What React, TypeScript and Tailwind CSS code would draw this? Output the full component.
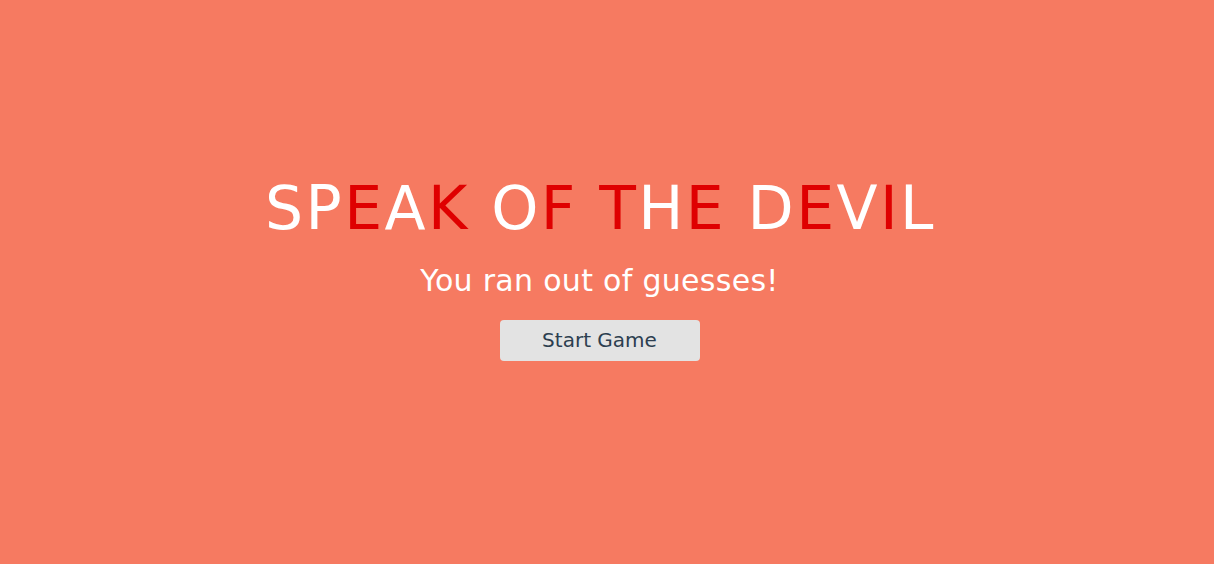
export default function App() {
  const letters: [string, boolean][] = [
    ["S", false], ["P", false], ["E", true], ["A", false], ["K", true], [" ", false],
    ["O", false], ["F", true], [" ", false],
    ["T", true], ["H", false], ["E", true], [" ", false],
    ["D", false], ["E", true], ["V", false], ["I", true], ["L", false],
  ];
  return (
    <div className="w-full h-[564px] bg-[#f67a61] flex flex-col items-center justify-center pr-[15px] pb-[10px] font-['DejaVu_Sans',sans-serif]">
      <h1 className="text-[60px] leading-none font-normal text-white whitespace-pre tracking-[2.4px] mt-[-16px] mr-[-2px]">
        {letters.map(([ch, red], i) => (
          <span key={i} className={red ? "text-[#df0000]" : "text-white"}>{ch}</span>
        ))}
      </h1>
      <p className="text-[30px] leading-none text-white tracking-[0.3px] mt-[28px]">You ran out of guesses!</p>
      <button className="mt-[24px] w-[200px] h-[41px] rounded-[4px] bg-[#e3e3e3] text-[#2c3e50] text-[20px]">
        Start Game
      </button>
    </div>
  );
}
